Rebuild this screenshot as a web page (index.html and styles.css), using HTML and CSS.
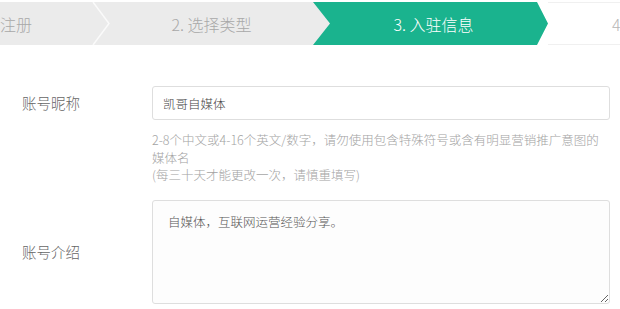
FILE: index.html
```html
<!DOCTYPE html>
<html lang="zh-CN">
<head>
  <meta charset="UTF-8">
  <meta name="viewport" content="width=device-width, initial-scale=1.0">
  <title>入驻信息</title>
  <link rel="stylesheet" href="styles.css">
</head>
<body>
  <div class="steps">
    <div class="step step-first">
      <span class="step-text">注册</span>
      <svg class="divider" width="18" height="43" viewBox="0 0 18 43">
        <polyline points="1,0 17,21.5 1,43" fill="none" stroke="#fafafa" stroke-width="1.5"/>
      </svg>
    </div>
    <div class="step step-second">
      <span class="step-text">2. 选择类型</span>
    </div>
    <div class="step step-current">
      <div class="arrow">
        <span class="step-text">3. 入驻信息</span>
      </div>
    </div>
    <div class="step step-last">
      <span class="step-text">4</span>
    </div>
  </div>

  <form class="form">
    <div class="row">
      <label class="label" for="nickname">账号昵称</label>
      <div class="field">
        <input class="input" type="text" id="nickname" value="凯哥自媒体">
        <p class="hint">2-8个中文或4-16个英文/数字，请勿使用包含特殊符号或含有明显营销推广意图的媒体名<br>(每三十天才能更改一次，请慎重填写)</p>
      </div>
    </div>
    <div class="row row-center">
      <label class="label" for="intro">账号介绍</label>
      <div class="field">
        <textarea class="textarea" id="intro">自媒体，互联网运营经验分享。</textarea>
      </div>
    </div>
  </form>
</body>
</html>
```

FILE: styles.css
```css
/* General */
body {
  margin: 0;
  background: #fff;
  font-family: "Noto Sans CJK SC", "Liberation Sans", sans-serif;
  font-weight: 300;
  overflow: hidden;
}

/* Step bar */
.steps {
  display: flex;
  width: 620px;
  height: 43px;
  margin-top: 2px;
  white-space: nowrap;
  overflow: hidden;
}

.step {
  display: flex;
  align-items: center;
  height: 43px;
  font-size: 16px;
  color: #a8a8a8;
  flex-shrink: 0;
}

.step-first {
  width: 110px;
  background: #ebebeb;
}

.step-first .divider {
  margin-left: auto;
}

.step-second {
  width: 203px;
  justify-content: center;
  background: #ebebeb;
}

.step-current {
  width: 235px;
  background: linear-gradient(to right, #ebebeb 50%, #fff 50%);
}

.arrow {
  width: 100%;
  height: 100%;
  display: flex;
  align-items: center;
  justify-content: center;
  padding-left: 6px;
  box-sizing: border-box;
  background: #1ab38e;
  color: #fff;
  clip-path: polygon(0 0, 224px 0, 235px 50%, 224px 100%, 0 100%, 17px 50%);
}

.step-last {
  flex: 1;
  flex-shrink: 1;
  padding-left: 64px;
  box-sizing: border-box;
  border-top: 1px solid #f0f0f0;
  border-bottom: 1px solid #f0f0f0;
  color: #b5b5b5;
}

/* Form */
.form {
  margin-top: 41px;
}

.row {
  display: flex;
  align-items: flex-start;
  margin-bottom: 16px;
}

.row-center {
  align-items: center;
}

.label {
  width: 152px;
  padding-left: 22px;
  box-sizing: border-box;
  line-height: 34px;
  font-size: 14.5px;
  color: #666;
  flex-shrink: 0;
}

.field {
  width: 458px;
}

.input {
  display: block;
  width: 100%;
  height: 34px;
  box-sizing: border-box;
  padding: 0 10px;
  border: 1px solid #dedede;
  border-radius: 3px;
  font-family: inherit;
  font-weight: 300;
  font-size: 12.5px;
  color: #444;
  outline: none;
}

.hint {
  margin: 11px 0 0;
  font-size: 12.5px;
  line-height: 17.5px;
  color: #a3a3a3;
}

.textarea {
  display: block;
  width: 100%;
  height: 104px;
  box-sizing: border-box;
  padding: 11px 15px;
  border: 1px solid #dedede;
  border-radius: 3px;
  background: #fdfdfd;
  font-family: inherit;
  font-weight: 300;
  font-size: 12.5px;
  line-height: 20px;
  color: #555;
  outline: none;
}
```
